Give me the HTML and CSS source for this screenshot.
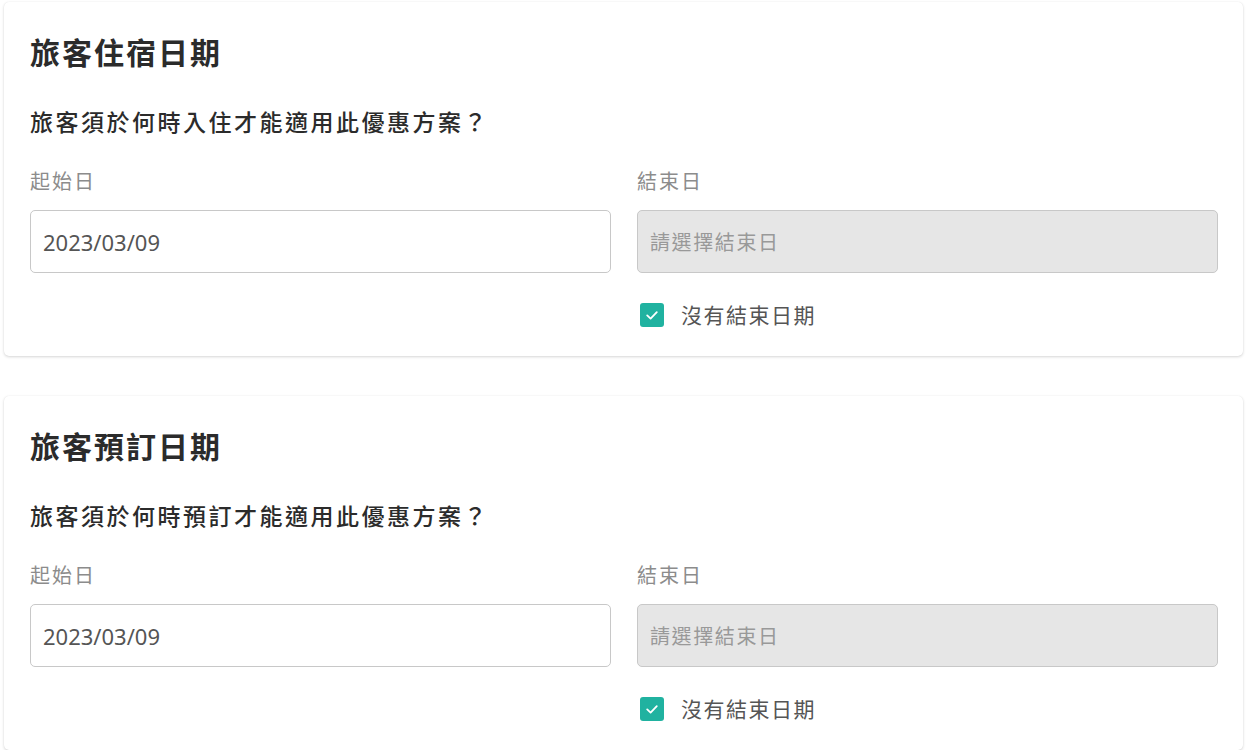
FILE: index.html
```html
<!DOCTYPE html>
<html lang="zh-Hant">
<head>
<meta charset="utf-8">
<title>優惠方案日期</title>
<link rel="stylesheet" href="styles.css">
</head>
<body>
<div class="page">
  <section class="card">
    <h2 class="card-title">旅客住宿日期</h2>
    <p class="card-question">旅客須於何時入住才能適用此優惠方案？</p>
    <div class="fields">
      <div class="field">
        <label class="field-label">起始日</label>
        <div class="input">2023/03/09</div>
      </div>
      <div class="field">
        <label class="field-label">結束日</label>
        <div class="input input-disabled">請選擇結束日</div>
        <div class="check-row">
          <span class="checkbox"><svg viewBox="0 0 24 24" width="24" height="24"><path d="M7.2 12.4 L10.6 15.6 L16.8 9.2" fill="none" stroke="#fff" stroke-width="1.8" stroke-linecap="round" stroke-linejoin="round"/></svg></span>
          <span class="check-label">沒有結束日期</span>
        </div>
      </div>
    </div>
  </section>
  <section class="card">
    <h2 class="card-title">旅客預訂日期</h2>
    <p class="card-question">旅客須於何時預訂才能適用此優惠方案？</p>
    <div class="fields">
      <div class="field">
        <label class="field-label">起始日</label>
        <div class="input">2023/03/09</div>
      </div>
      <div class="field">
        <label class="field-label">結束日</label>
        <div class="input input-disabled">請選擇結束日</div>
        <div class="check-row">
          <span class="checkbox"><svg viewBox="0 0 24 24" width="24" height="24"><path d="M7.2 12.4 L10.6 15.6 L16.8 9.2" fill="none" stroke="#fff" stroke-width="1.8" stroke-linecap="round" stroke-linejoin="round"/></svg></span>
          <span class="check-label">沒有結束日期</span>
        </div>
      </div>
    </div>
  </section>
</div>
</body>
</html>
```
FILE: styles.css
```css
html, body {
  margin: 0;
  padding: 0;
  background: #ffffff;
}
body {
  font-family: "Noto Sans", "Noto Sans CJK TC", sans-serif;
  color: #333;
}
.page {
  padding: 2px 4px 0 4px;
  display: flex;
  flex-direction: column;
  gap: 40px;
}
.card {
  background: #fff;
  border-radius: 5px;
  box-shadow: 0 1px 3px rgba(0,0,0,0.16), 0 0 1px rgba(0,0,0,0.08);
  padding: 32px 25px 28px 26px;
  height: 354px;
  box-sizing: border-box;
}
.card-title {
  margin: 0;
  font-size: 30px;
  line-height: 38px;
  font-weight: 700;
  color: #2b2b2b;
  letter-spacing: 2px;
}
.card-question {
  margin: 35px 0 0 0;
  font-size: 23px;
  line-height: 30px;
  font-weight: 500;
  color: #2b2b2b;
  letter-spacing: 2.5px;
}
.fields {
  margin-top: 31px;
  display: grid;
  grid-template-columns: 1fr 1fr;
  column-gap: 26px;
}
.field {
  display: flex;
  flex-direction: column;
}
.field-label {
  font-size: 20px;
  line-height: 28px;
  color: #8c8c8c;
  letter-spacing: 2px;
}
.input {
  margin-top: 14px;
  height: 63px;
  box-sizing: border-box;
  border: 1px solid #c8c8c8;
  border-radius: 5px;
  padding: 0 12px;
  display: flex;
  align-items: center;
  font-size: 22px;
  color: #555;
}
.input-disabled {
  background: #e6e6e6;
  color: #999;
  font-size: 20px;
  letter-spacing: 1.6px;
}
.check-row {
  margin-top: 30px;
  display: flex;
  align-items: center;
  gap: 17px;
  padding-left: 3px;
}
.checkbox {
  width: 24px;
  height: 24px;
  border-radius: 3px;
  background: #20b2a0;
  display: flex;
  flex: none;
}
.check-label {
  font-size: 21px;
  line-height: 24px;
  color: #555;
  letter-spacing: 1.5px;
}
```
